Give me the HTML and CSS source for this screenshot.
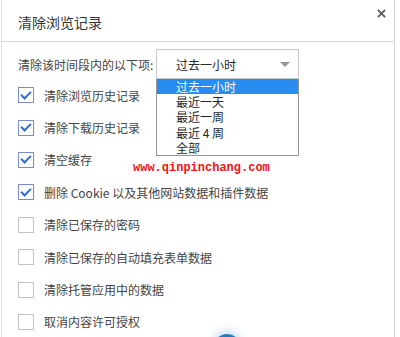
FILE: index.html
```html
<!DOCTYPE html>
<html lang="zh-CN">
  <head>
    <meta charset="UTF-8" />
    <meta name="viewport" content="width=device-width, initial-scale=1.0" />
    <title>清除浏览记录</title>
    <link rel="stylesheet" href="styles.css">
  </head>
  <body>
    <div class="dialog">
      <div class="dialog-header">
        <span class="dialog-title">清除浏览记录</span>
        <button class="close-button">
          <svg viewBox="0 0 10 10" width="9" height="9">
            <path d="M1 1L9 9M9 1L1 9" stroke="currentColor" stroke-width="2" />
          </svg>
        </button>
      </div>

      <div class="dialog-body">
        <div class="time-row">
          <span class="time-label">清除该时间段内的以下项:</span>
          <div class="time-select">
            <div class="select-box">
              <span>过去一小时</span>
              <span class="select-arrow"></span>
            </div>
            <ul class="select-list">
              <li class="selected">过去一小时</li>
              <li>最近一天</li>
              <li>最近一周</li>
              <li>最近 4 周</li>
              <li>全部</li>
            </ul>
          </div>
        </div>

        <ul class="options">
          <li class="option checked"><span class="check"></span>清除浏览历史记录</li>
          <li class="option checked"><span class="check"></span>清除下载历史记录</li>
          <li class="option checked"><span class="check"></span>清空缓存</li>
          <li class="option checked"><span class="check"></span>删除 Cookie 以及其他网站数据和插件数据</li>
          <li class="option"><span class="check"></span>清除已保存的密码</li>
          <li class="option"><span class="check"></span>清除已保存的自动填充表单数据</li>
          <li class="option"><span class="check"></span>清除托管应用中的数据</li>
          <li class="option"><span class="check"></span>取消内容许可授权</li>
        </ul>
      </div>

      <div class="watermark">www.qinpinchang.com</div>
      <div class="spinner"></div>
    </div>
  </body>
</html>
```

FILE: styles.css
```css
body {
  margin: 0px;
  background-color: rgb(255, 255, 255);
  font-family: 'Noto Sans CJK SC', 'Noto Sans', sans-serif;
  color: rgb(51, 51, 51);
}

.dialog {
  position: relative;
  width: 392px;
  height: 337px;
  margin-left: 1px;
  border-left: 1px solid rgb(226, 226, 226);
  border-right: 1px solid rgb(214, 214, 214);
  overflow: hidden;
}

.dialog-header {
  height: 41px;
  display: flex;
  justify-content: space-between;
  align-items: flex-start;
  padding: 0px 8px 0px 16px;
  border-bottom: 1px solid rgb(214, 214, 214);
}

.dialog-title {
  font-size: 14px;
  line-height: 44px;
  color: rgb(51, 51, 51);
}

.close-button {
  margin-top: 9px;
  padding: 0px;
  border: none;
  background-color: transparent;
  color: rgb(90, 90, 90);
  display: grid;
  place-items: center;
  width: 9px;
  height: 9px;
}

.dialog-body {
  padding: 7px 0px 0px 16px;
}

.time-row {
  display: flex;
  align-items: center;
  font-size: 12px;
}

.time-label {
  flex: 0 0 138px;
  color: rgb(68, 68, 68);
}

.time-select {
  position: relative;
  width: 143px;
}

.select-box {
  height: 28px;
  border: 1px solid rgb(200, 200, 200);
  display: flex;
  align-items: center;
  justify-content: space-between;
  padding: 0px 8px 0px 19px;
  color: rgb(40, 40, 40);
}

.select-arrow {
  width: 0px;
  height: 0px;
  border-left: 5px solid transparent;
  border-right: 5px solid transparent;
  border-top: 5px solid rgb(150, 150, 150);
}

.select-list {
  position: absolute;
  top: 30px;
  left: 0px;
  width: 141px;
  margin: 0px;
  padding: 0px;
  list-style: none;
  background-color: rgb(255, 255, 255);
  border: 1px solid rgb(150, 150, 150);
  border-top: none;
  z-index: 2;
}

.select-list > li {
  height: 15.2px;
  line-height: 15px;
  padding-left: 19px;
  color: rgb(40, 40, 40);
}

.select-list > li.selected {
  background-color: rgb(40, 140, 240);
  color: rgb(255, 255, 255);
}

.options {
  margin: 0px;
  padding: 0px;
  list-style: none;
}

.option {
  height: 32.4px;
  display: flex;
  align-items: center;
  gap: 10px;
  font-size: 12px;
  color: rgb(68, 68, 68);
}

.check {
  flex: 0 0 14px;
  width: 14px;
  height: 14px;
  border: 1px solid rgb(196, 196, 196);
  background-color: rgb(255, 255, 255);
  display: grid;
  place-items: center;
}

.option.checked > .check {
  border-color: rgb(120, 140, 200);
}

.option.checked > .check::after {
  content: '';
  width: 8px;
  height: 4px;
  margin-top: -3px;
  border-left: 2px solid rgb(50, 110, 210);
  border-bottom: 2px solid rgb(50, 110, 210);
  transform: rotate(-45deg);
}

.watermark {
  position: absolute;
  left: 131px;
  top: 161px;
  font-family: 'Liberation Mono', monospace;
  font-size: 12px;
  font-weight: bold;
  color: rgb(240, 20, 20);
}

.spinner {
  position: absolute;
  left: 211px;
  top: 334px;
  width: 28px;
  height: 28px;
  border-radius: 100%;
  background-color: rgb(40, 120, 190);
  box-shadow: 0px -4px 8px rgba(80, 160, 230, 0.3);
}
```
